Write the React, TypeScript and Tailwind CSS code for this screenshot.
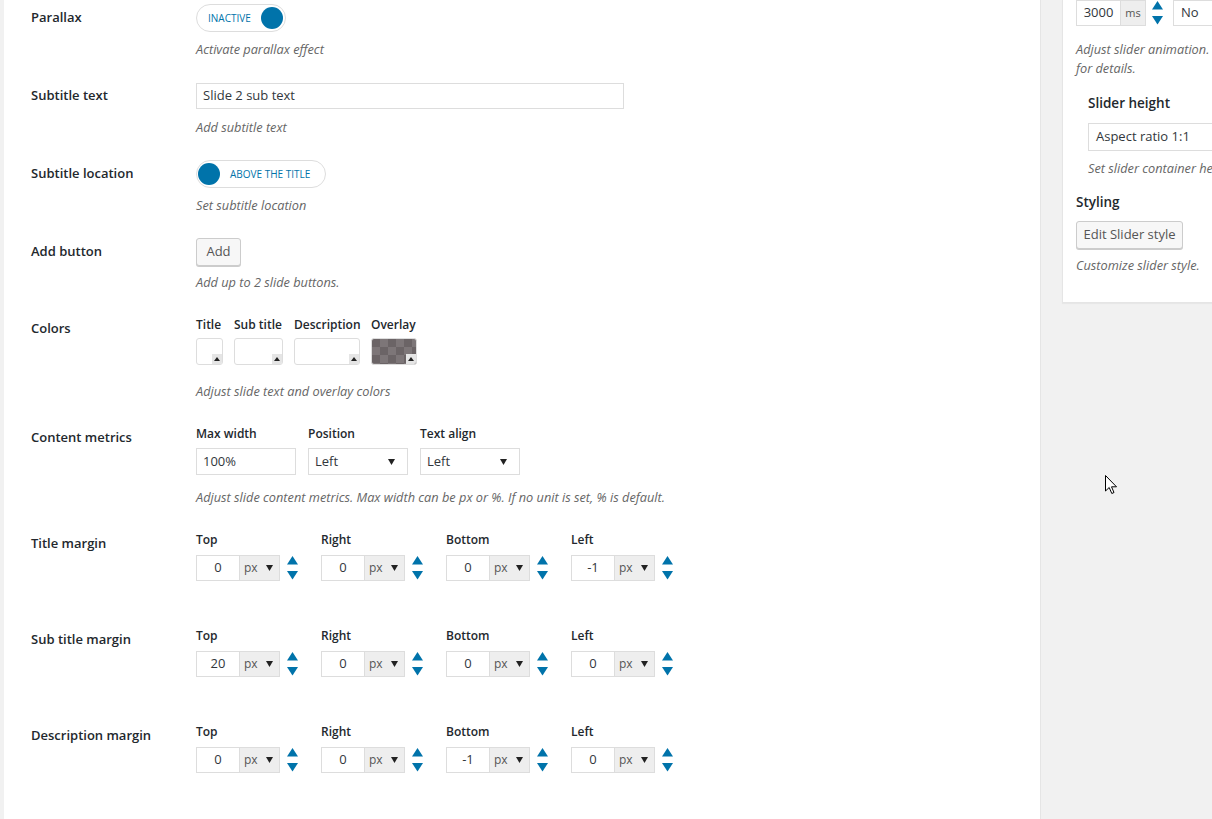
import React from "react";

const font = { fontFamily: '"Open Sans", "Noto Sans", sans-serif' };

function Label({ children, className = "" }: { children: React.ReactNode; className?: string }) {
  return (
    <div className={`w-[165px] shrink-0 text-[13px] font-semibold leading-[20px] text-[#23282d] ${className}`}>
      {children}
    </div>
  );
}

function Desc({ children, className = "" }: { children: React.ReactNode; className?: string }) {
  return <p className={`text-[12.75px] italic leading-[18px] text-[#666] whitespace-nowrap ${className}`}>{children}</p>;
}

function SubLabel({ children }: { children: React.ReactNode }) {
  return <div className="h-[18px] text-[12px] font-semibold leading-[18px] text-[#23282d] whitespace-nowrap">{children}</div>;
}

function Toggle({ text, on = false, width }: { text: string; on?: boolean; width: string }) {
  return (
    <div className={`flex h-[28px] ${width} items-center rounded-full border border-[#ddd] bg-white px-[1px]`}>
      {on && <span className="h-[22px] w-[22px] rounded-full bg-[#0073aa]" />}
      <span className="flex-1 pl-[10px] text-[10px] uppercase leading-none text-[#0073aa]">{text}</span>
      {!on && <span className="mr-[1px] h-[22px] w-[22px] rounded-full bg-[#0073aa]" />}
    </div>
  );
}

function Caret() {
  return (
    <svg width="7" height="6" viewBox="0 0 7 6" className="shrink-0">
      <polygon points="0,0 7,0 3.5,6" fill="#222" />
    </svg>
  );
}

function Spinner({ className = "ml-[7px]" }: { className?: string }) {
  return (
    <svg width="11" height="24" viewBox="0 0 11 24" className={`shrink-0 ${className}`}>
      <polygon points="0,8.5 5.5,0 11,8.5" fill="#0073aa" />
      <polygon points="0,15 11,15 5.5,23.5" fill="#0073aa" />
    </svg>
  );
}

function Select({ value, width }: { value: string; width: string }) {
  return (
    <div className={`flex h-[27px] ${width} items-center justify-between border border-[#ddd] bg-white pl-[6px] pr-[12px] text-[13px] text-[#32373c]`}>
      <span>{value}</span>
      <Caret />
    </div>
  );
}

function UnitInput({ value }: { value: string }) {
  return (
    <div className="flex items-center">
      <div className="flex h-[26px] w-[44px] items-center justify-center border border-[#ddd] bg-white text-[13px] text-[#32373c]">
        {value}
      </div>
      <div className="flex h-[26px] w-[40px] items-center justify-between border border-l-0 border-[#ddd] bg-[#eee] pl-[4px] pr-[6px] text-[12px] text-[#555]">
        <span>px</span>
        <Caret />
      </div>
      <Spinner />
    </div>
  );
}

function MarginRow({ label, values, className }: { label: string; values: string[]; className: string }) {
  const names = ["Top", "Right", "Bottom", "Left"];
  return (
    <div className={`flex ${className}`}>
      <Label className="mt-[2px]">{label}</Label>
      <div className="flex">
        {names.map((n, i) => (
          <div key={n} className="w-[125px]">
            <SubLabel>{n}</SubLabel>
            <div className="mt-[6px]">
              <UnitInput value={values[i]} />
            </div>
          </div>
        ))}
      </div>
    </div>
  );
}

function Swatch({ width, overlay = false }: { width: string; overlay?: boolean }) {
  return (
    <div
      className={`relative h-[27px] ${width} overflow-hidden rounded-[3px] border border-[#ddd] ${
        overlay ? "bg-[#716a6c] bg-[repeating-conic-gradient(#7d7678_0%_25%,#6b6466_0%_50%)] bg-[length:16px_16px]" : "bg-white"
      }`}
    >
      <div className="absolute bottom-0 right-0 flex h-[10px] w-[10px] items-center justify-center bg-[#e5e5e5]">
        <svg width="6" height="4" viewBox="0 0 6 4">
          <polygon points="0,4 3,0 6,4" fill="#222" />
        </svg>
      </div>
    </div>
  );
}

function ColorField({ label, width, overlay }: { label: string; width: string; overlay?: boolean }) {
  return (
    <div className={width}>
      <SubLabel>{label}</SubLabel>
      <div className="mt-[4px]">
        <Swatch width={width} overlay={overlay} />
      </div>
    </div>
  );
}

function MainPanel() {
  return (
    <div className="w-[1037px] shrink-0 border-r border-[#e5e5e5] bg-white pl-[27px] pt-[4px]">
      <div className="flex">
        <Label className="mt-[3px]">Parallax</Label>
        <div>
          <Toggle text="Inactive" width="w-[90px]" />
          <Desc className="mt-[8px]">Activate parallax effect</Desc>
        </div>
      </div>

      <div className="mt-[25px] flex">
        <Label className="mt-[2px]">Subtitle text</Label>
        <div>
          <div className="flex h-[26px] w-[428px] items-center border border-[#ddd] bg-white px-[6px] text-[13px] text-[#32373c]">
            Slide 2 sub text
          </div>
          <Desc className="mt-[9px]">Add subtitle text</Desc>
        </div>
      </div>

      <div className="mt-[24px] flex">
        <Label className="mt-[3px]">Subtitle location</Label>
        <div>
          <Toggle text="Above the title" on width="w-[130px]" />
          <Desc className="mt-[8px]">Set subtitle location</Desc>
        </div>
      </div>

      <div className="mt-[24px] flex">
        <Label className="mt-[3px]">Add button</Label>
        <div>
          <button className="h-[28px] w-[45px] rounded-[3px] border border-[#ccc] bg-[#f7f7f7] text-[13px] text-[#555] shadow-[0_1px_0_#ccc]">
            Add
          </button>
          <Desc className="mt-[7px]">Add up to 2 slide buttons.</Desc>
        </div>
      </div>

      <div className="mt-[25px] flex">
        <Label className="mt-[2px]">Colors</Label>
        <div>
          <div className="flex gap-[11px]">
            <ColorField label="Title" width="w-[27px]" />
            <ColorField label="Sub title" width="w-[49px]" />
            <ColorField label="Description" width="w-[66px]" />
            <ColorField label="Overlay" width="w-[46px]" overlay />
          </div>
          <Desc className="mt-[17px]">Adjust slide text and overlay colors</Desc>
        </div>
      </div>

      <div className="mt-[25px] flex">
        <Label className="mt-[2px]">Content metrics</Label>
        <div>
          <div className="flex gap-[12px]">
            <div>
              <SubLabel>Max width</SubLabel>
              <div className="mt-[5px] flex h-[27px] w-[100px] items-center border border-[#ddd] bg-white px-[6px] text-[13px] text-[#32373c]">
                100%
              </div>
            </div>
            <div>
              <SubLabel>Position</SubLabel>
              <div className="mt-[5px]">
                <Select value="Left" width="w-[100px]" />
              </div>
            </div>
            <div>
              <SubLabel>Text align</SubLabel>
              <div className="mt-[5px]">
                <Select value="Left" width="w-[100px]" />
              </div>
            </div>
          </div>
          <Desc className="mt-[13px]">
            Adjust slide content metrics. Max width can be px or %. If no unit is set, % is default.
          </Desc>
        </div>
      </div>

      <MarginRow label="Title margin" values={["0", "0", "0", "-1"]} className="mt-[25px]" />
      <MarginRow label="Sub title margin" values={["20", "0", "0", "0"]} className="mt-[46px]" />
      <MarginRow label="Description margin" values={["0", "0", "-1", "0"]} className="mt-[46px]" />
    </div>
  );
}

function Sidebar() {
  return (
    <div className="min-w-0 flex-1 overflow-hidden">
      <div className="ml-[21px] w-[300px] border border-t-0 border-[#e5e5e5] bg-white pb-[28px] pl-[13px] shadow-[0_1px_1px_rgba(0,0,0,0.04)]">
        <div className="flex items-center">
          <div className="flex h-[26px] w-[45px] items-center justify-center border border-[#ddd] bg-white text-[13px] text-[#32373c]">
            3000
          </div>
          <div className="flex h-[26px] w-[25px] items-center justify-center border border-l-0 border-[#ddd] bg-[#eee] text-[11px] text-[#555]">
            ms
          </div>
          <Spinner className="ml-[6px]" />
          <div className="ml-[10px] flex h-[26px] w-[100px] items-center border border-[#ddd] bg-white pl-[7px] text-[13px] text-[#32373c]">
            No
          </div>
        </div>
        <Desc className="mt-[14px] leading-[19px]">
          Adjust slider animation.
          <br />
          for details.
        </Desc>
        <div className="ml-[12px] mt-[15px]">
          <div className="text-[13.5px] font-semibold leading-[20px] text-[#23282d]">Slider height</div>
          <div className="mt-[10px] flex h-[28px] w-[200px] items-center border border-[#ddd] bg-white pl-[7px] text-[13px] text-[#32373c]">
            Aspect ratio 1:1
          </div>
          <Desc className="mt-[8px]">Set slider container height</Desc>
        </div>
        <div className="mt-[15px] text-[13.5px] font-semibold leading-[20px] text-[#23282d]">Styling</div>
        <button className="mt-[9px] h-[28px] w-[107px] rounded-[3px] border border-[#ccc] bg-[#f7f7f7] text-[13px] text-[#555] shadow-[0_1px_0_#ccc]">
          Edit Slider style
        </button>
        <Desc className="mt-[7px]">Customize slider style.</Desc>
      </div>
    </div>
  );
}

export default function App() {
  return (
    <div className="relative flex h-[819px] w-full overflow-hidden bg-[#f1f1f1]" style={font}>
      <div className="w-[4px] shrink-0" />
      <MainPanel />
      <Sidebar />
      <svg width="13" height="20" viewBox="0 0 13 20" className="absolute left-[1105px] top-[475px]">
        <path d="M0.5 0.5 L0.5 16 L4.2 12.5 L6.8 18.5 L9 17.5 L6.5 11.8 L11.5 11.8 Z" fill="#fff" stroke="#000" strokeWidth="1" />
      </svg>
    </div>
  );
}
